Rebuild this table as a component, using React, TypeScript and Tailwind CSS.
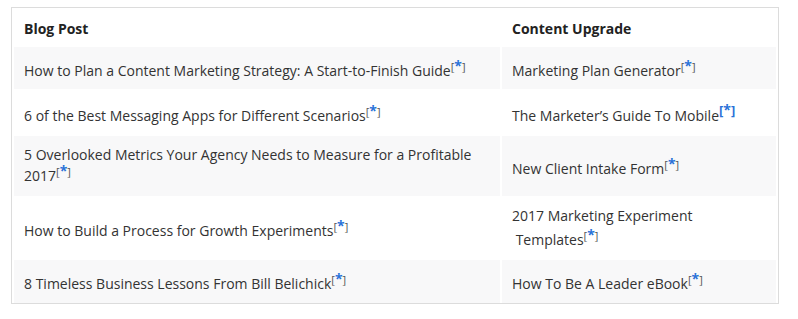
function Ref({ strong }: { strong?: boolean }) {
  return (
    <sup
      className={
        strong
          ? "relative top-[-0.5em] align-baseline text-[13px] font-bold leading-none text-[#2a72d8]"
          : "relative top-[-0.45em] align-baseline text-[11px] leading-none text-[#555]"
      }
    >
      [<span className="text-[14px] font-bold text-[#2a72d8]">*</span>]
    </sup>
  );
}

const data = [
  {
    post: "How to Plan a Content Marketing Strategy: A Start-to-Finish Guide",
    upgrade: "Marketing Plan Generator",
    h: "h-[42px]",
    pad: "pt-[4px]",
    pad2: "pt-[4px]",
    shaded: true,
  },
  {
    post: "6 of the Best Messaging Apps for Different Scenarios",
    upgrade: "The Marketer\u2019s Guide To Mobile",
    strong: true,
    h: "h-[47px]",
    pad: "pt-[6px]",
    pad2: "pt-[6px]",
    shaded: false,
  },
  {
    post: "5 Overlooked Metrics Your Agency Needs to Measure for a Profitable 2017",
    upgrade: "New Client Intake Form",
    h: "h-[60px]",
    pad: "pb-[2px]",
    pad2: "pt-[4px]",
    shaded: true,
  },
  {
    post: "How to Build a Process for Growth Experiments",
    upgrade: (
      <>
        <span className="block leading-[24px]">2017 Marketing Experiment</span>
        <span className="block leading-[24px]">
          &nbsp;Templates
          <Ref />
        </span>
      </>
    ),
    h: "h-[64px]",
    pad: "pt-[4px]",
    pad2: "",
    shaded: false,
  },
  {
    post: "8 Timeless Business Lessons From Bill Belichick",
    upgrade: "How To Be A Leader eBook",
    h: "h-[43px]",
    pad: "pt-[4px]",
    pad2: "pt-[4px]",
    shaded: true,
  },
];

export default function App() {
  return (
    <div className="min-h-[319px] w-[798px] bg-white pl-[11px] pt-[7px] font-['Open_Sans',sans-serif] text-[14px] text-[#333]">
      <div className="w-[768px] border border-[#dcdcdc]">
        <table className="w-full border-separate border-spacing-x-[2px] border-spacing-y-0">
          <thead>
            <tr className="h-[39px]">
              <th className="w-[486px] px-[10px] pt-[2px] text-left align-middle font-bold text-[#222]">Blog Post</th>
              <th className="px-[10px] pt-[2px] text-left align-middle font-bold text-[#222]">Content Upgrade</th>
            </tr>
          </thead>
          <tbody>
            {data.map((r, i) => (
              <tr key={i} className={r.h}>
                <td className={`px-[10px] align-middle leading-[21px] ${r.pad} ${r.shaded ? "bg-[#f8f8f9]" : "bg-white"}`}>
                  {r.post}
                  <Ref />
                </td>
                <td className={`px-[10px] align-middle leading-[21px] ${r.pad2} ${r.shaded ? "bg-[#f8f8f9]" : "bg-white"}`}>
                  {typeof r.upgrade === "string" ? (
                    <>
                      {r.upgrade}
                      <Ref strong={r.strong} />
                    </>
                  ) : (
                    <div>{r.upgrade}</div>
                  )}
                </td>
              </tr>
            ))}
          </tbody>
        </table>
      </div>
    </div>
  );
}
